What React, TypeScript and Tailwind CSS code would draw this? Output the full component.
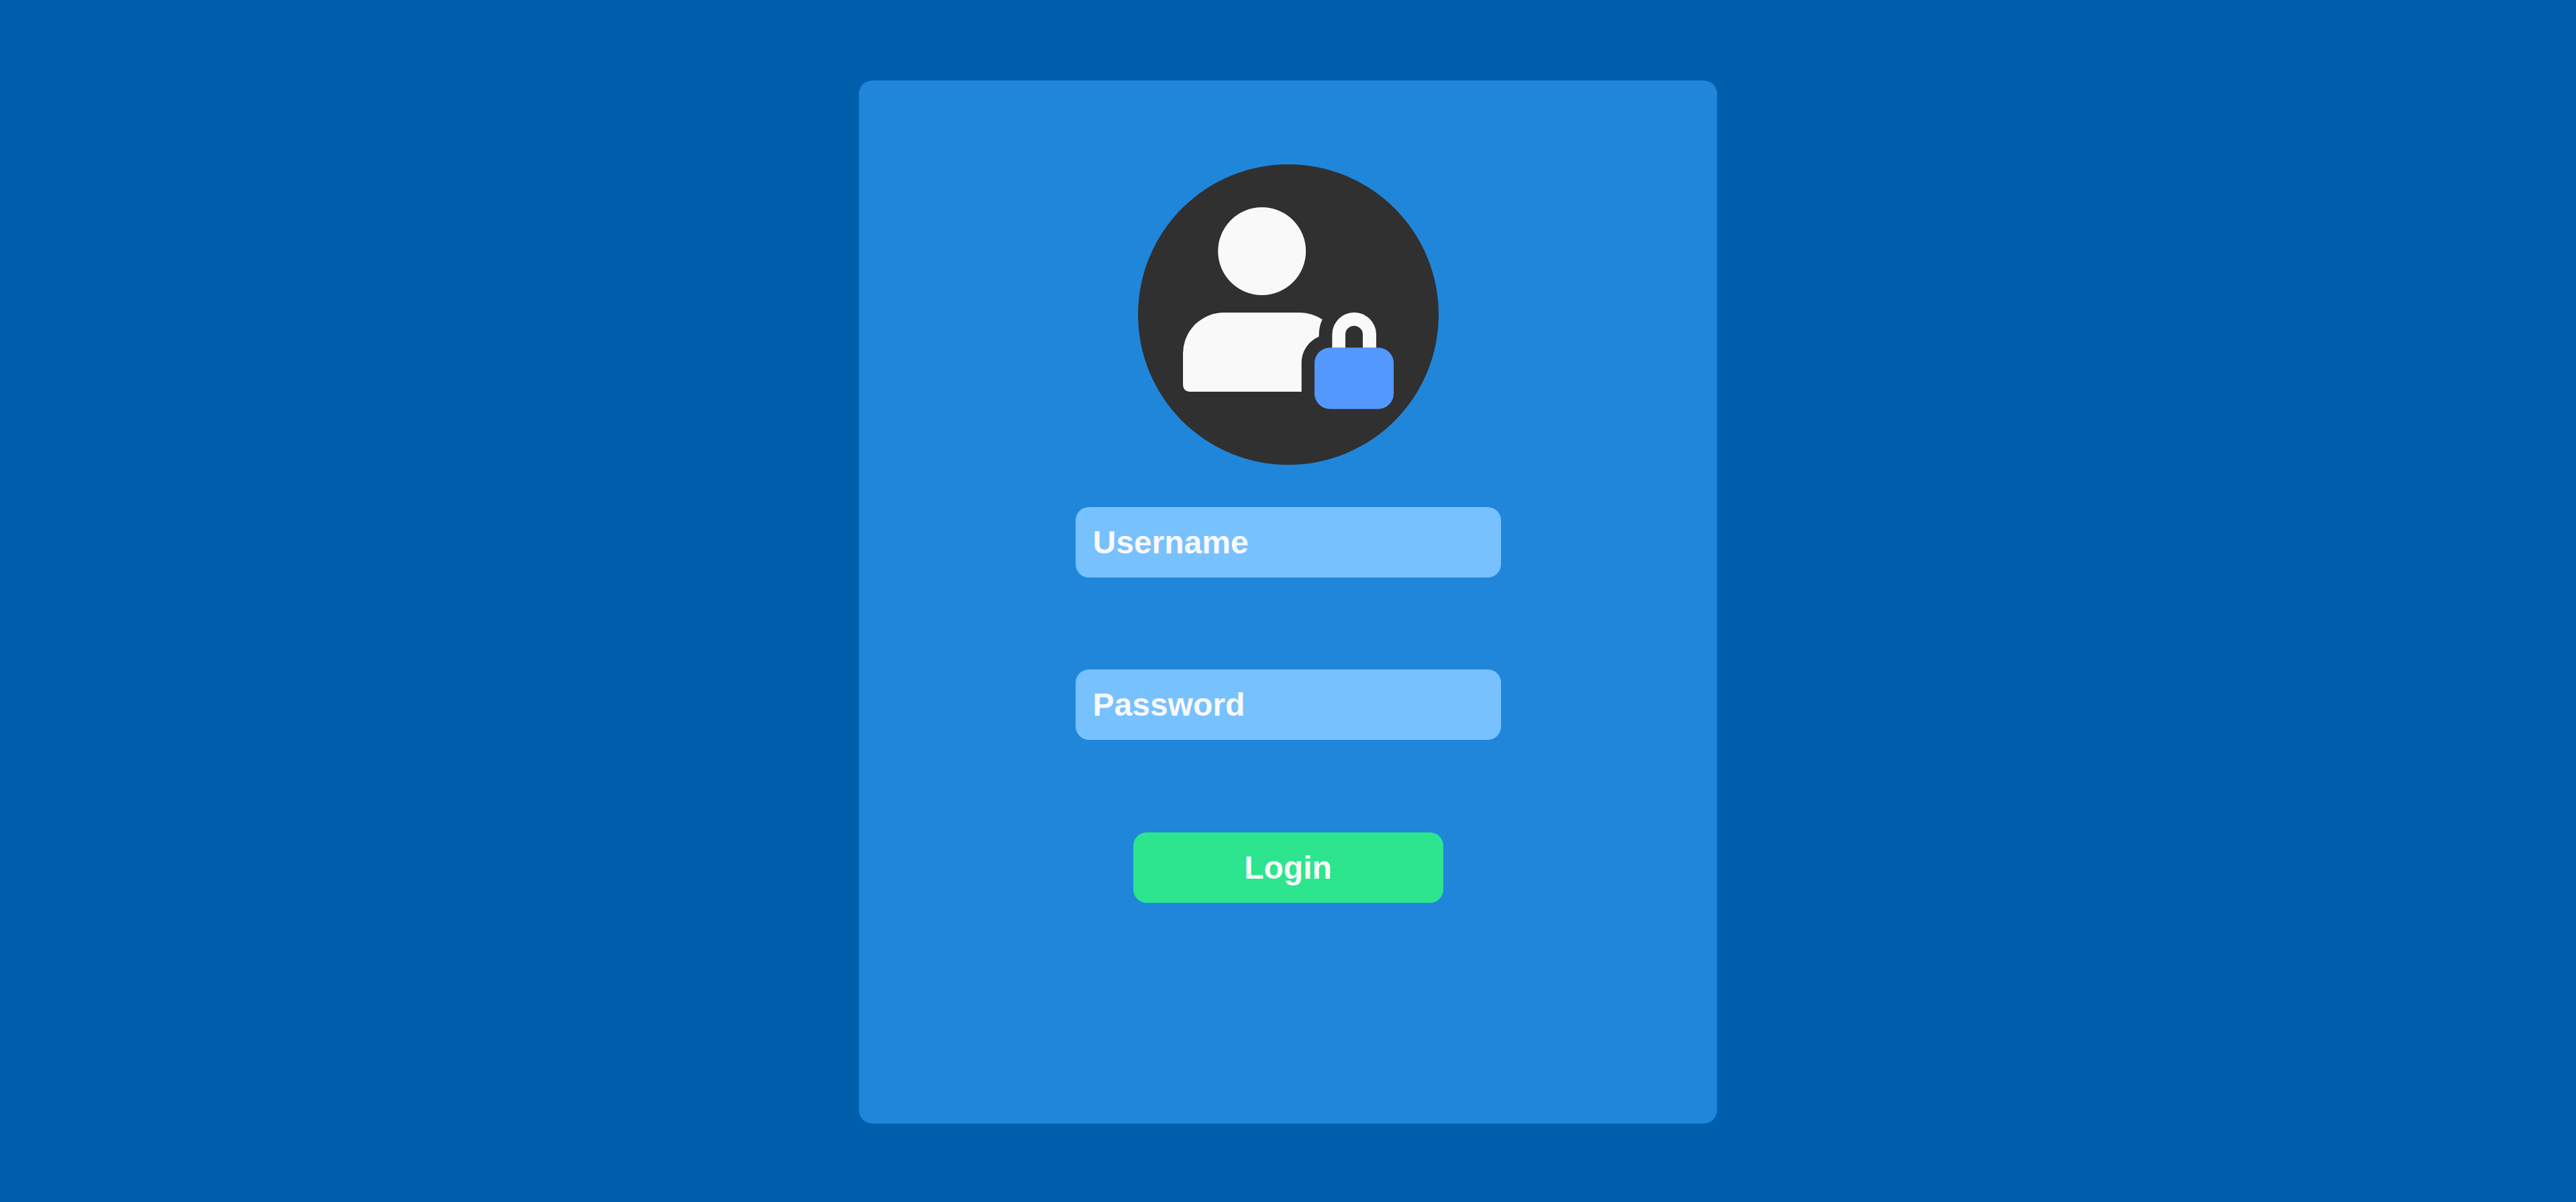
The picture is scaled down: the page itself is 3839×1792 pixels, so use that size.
import React from "react";

const field =
  "h-[105px] w-full rounded-[20px] bg-[#78c1ff] px-[26px] text-[48px] font-bold text-[#f9f9f9] placeholder:text-[#f9f9f9] placeholder:opacity-100 outline-none focus-visible:ring-4 focus-visible:ring-white";

function Avatar() {
  return (
    <svg
      viewBox="0 0 1344 1344"
      className="size-[448px] rounded-full bg-[#303030]"
      role="img"
      aria-label="User account"
    >
      <g transform="translate(-48 -45)">
        <circle cx="602" cy="433.5" r="196.5" fill="#f9f9f9" />
        <path
          d="M432 708H772A183 183 0 0 1 872 739A157 157 0 0 0 857 806V815A128 128 0 0 0 779 934V1062H278A29 29 0 0 1 249 1033V891A183 183 0 0 1 432 708Z"
          fill="#f9f9f9"
        />
        <path
          d="M916 866V806A98.5 98.5 0 0 1 1113 806V866H1053V806A39 39 0 0 0 975 806V866Z"
          fill="#f9f9f9"
        />
        <rect x="837" y="865" width="354" height="274" rx="69" fill="#5298ff" />
      </g>
    </svg>
  );
}

export default function App() {
  return (
    <main className="flex min-h-screen items-start justify-center bg-[#005fad] pt-[120px] pb-[117px] font-['Liberation_Sans',Arial,sans-serif]">
      <form
        onSubmit={(e) => e.preventDefault()}
        className="flex w-1/3 min-w-[700px] flex-col items-center rounded-[20px] bg-[#2086da] pt-[125px] pb-[329px]"
      >
        <Avatar />
        <div className="mt-[63px] flex w-[634px] flex-col items-center">
          <input type="text" name="username" aria-label="Username" placeholder="Username" className={field} />
          <input
            type="password"
            name="password"
            aria-label="Password"
            placeholder="Password"
            className={`mt-[137px] ${field}`}
          />
          <button
            type="submit"
            className="mt-[138px] h-[105px] w-[462px] cursor-pointer rounded-[20px] bg-[#2de58f] text-[48px] font-bold text-[#f9f9f9]"
          >
            Login
          </button>
        </div>
      </form>
    </main>
  );
}
